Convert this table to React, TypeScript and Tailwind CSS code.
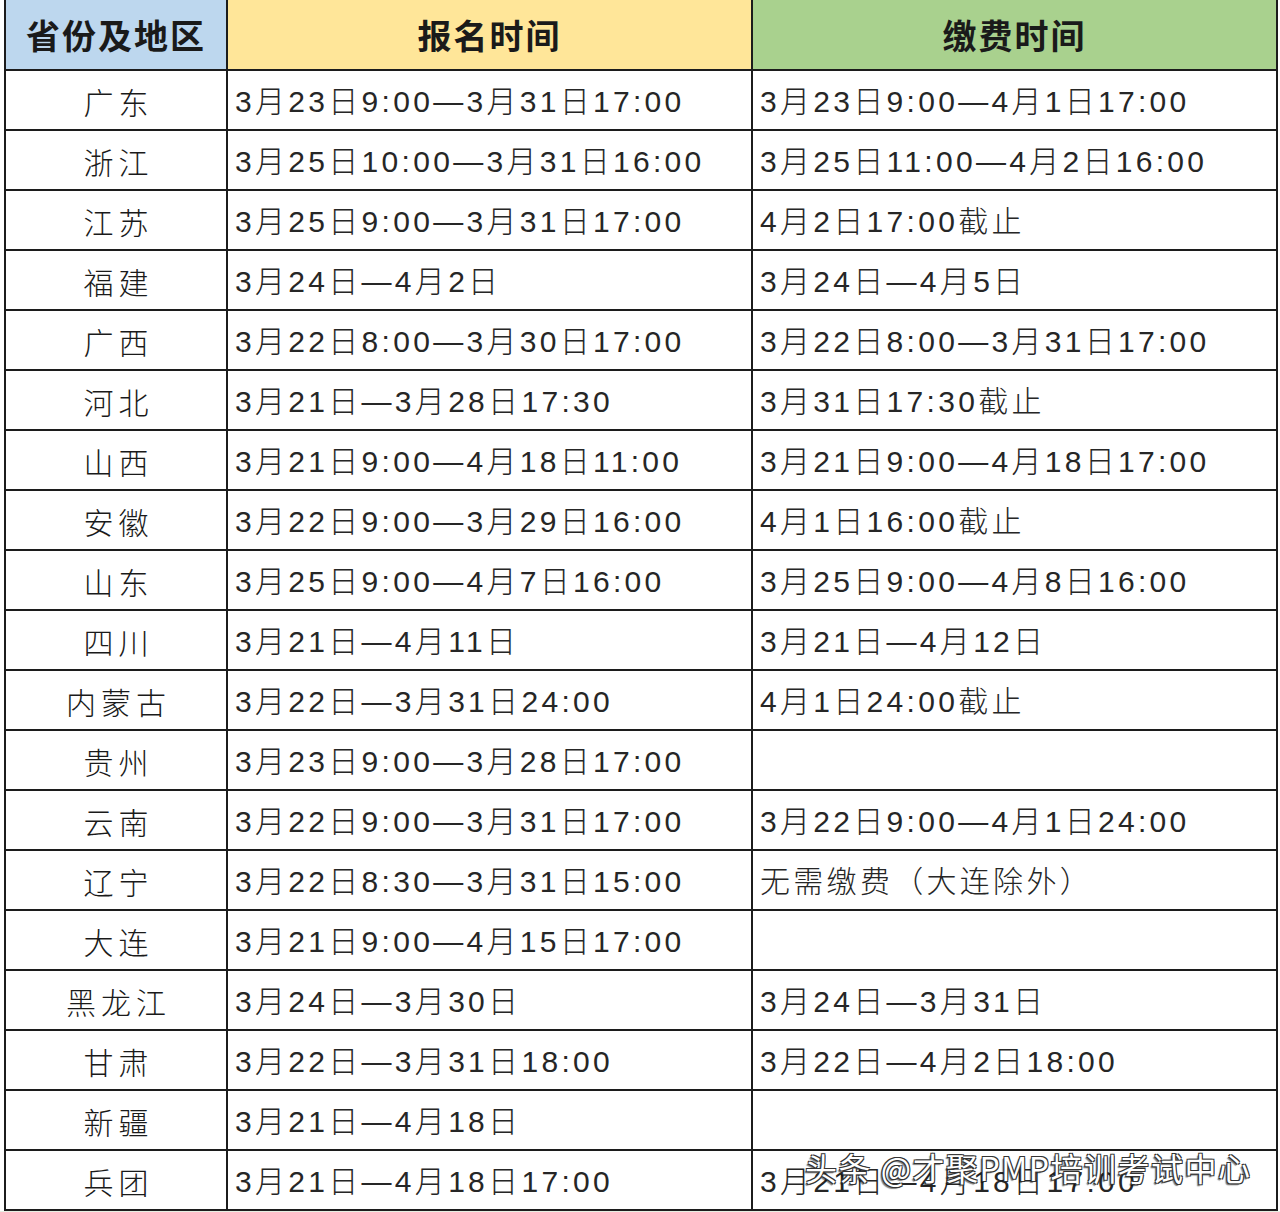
import React from "react";

const rows: [string, string, string][] = [
  ["广东", "3月23日9:00—3月31日17:00", "3月23日9:00—4月1日17:00"],
  ["浙江", "3月25日10:00—3月31日16:00", "3月25日11:00—4月2日16:00"],
  ["江苏", "3月25日9:00—3月31日17:00", "4月2日17:00截止"],
  ["福建", "3月24日—4月2日", "3月24日—4月5日"],
  ["广西", "3月22日8:00—3月30日17:00", "3月22日8:00—3月31日17:00"],
  ["河北", "3月21日—3月28日17:30", "3月31日17:30截止"],
  ["山西", "3月21日9:00—4月18日11:00", "3月21日9:00—4月18日17:00"],
  ["安徽", "3月22日9:00—3月29日16:00", "4月1日16:00截止"],
  ["山东", "3月25日9:00—4月7日16:00", "3月25日9:00—4月8日16:00"],
  ["四川", "3月21日—4月11日", "3月21日—4月12日"],
  ["内蒙古", "3月22日—3月31日24:00", "4月1日24:00截止"],
  ["贵州", "3月23日9:00—3月28日17:00", ""],
  ["云南", "3月22日9:00—3月31日17:00", "3月22日9:00—4月1日24:00"],
  ["辽宁", "3月22日8:30—3月31日15:00", "无需缴费（大连除外）"],
  ["大连", "3月21日9:00—4月15日17:00", ""],
  ["黑龙江", "3月24日—3月30日", "3月24日—3月31日"],
  ["甘肃", "3月22日—3月31日18:00", "3月22日—4月2日18:00"],
  ["新疆", "3月21日—4月18日", ""],
  ["兵团", "3月21日—4月18日17:00", "3月21日—4月18日17:00"],
];

const headCls =
  "h-[71px] border-r-2 border-b-2 border-[#1c1c1c] flex items-center justify-center text-[34px] font-bold tracking-[2px] font-['Noto_Sans_CJK_SC',sans-serif]";
const nameCls =
  "h-[60px] border-r-2 border-b-2 border-[#1c1c1c] flex items-center justify-center text-[30px] font-light tracking-[5px] pl-[5px] pt-[3px] font-['Noto_Sans_CJK_SC',sans-serif]";
const dataCls =
  "h-[60px] border-r-2 border-b-2 border-[#1c1c1c] flex items-center pl-[7px] pt-[3px] text-[30px] font-light tracking-[3.3px] whitespace-nowrap text-[#262626] font-['Liberation_Sans','Noto_Sans_CJK_SC',sans-serif]";

export default function App() {
  return (
    <div className="relative w-[1280px] h-[1212px] bg-white overflow-hidden">
      <div className="ml-[4px] w-[1274px] border-l-2 border-[#1c1c1c] grid grid-cols-[222px_525px_525px] text-[#1a1a1a]">
        <div className={`${headCls} bg-[#bdd7ee]`}>省份及地区</div>
        <div className={`${headCls} bg-[#ffe699]`}>报名时间</div>
        <div className={`${headCls} bg-[#a9d18e]`}>缴费时间</div>
        {rows.map(([p, a, b], i) => (
          <React.Fragment key={i}>
            <div className={nameCls}>{p}</div>
            <div className={dataCls}>{a}</div>
            <div className={dataCls}>{b}</div>
          </React.Fragment>
        ))}
      </div>
      <div className="h-[1px] bg-[#e6eee2]" />
      <div className="absolute left-[805px] top-[1143px] text-[32px] tracking-[1.5px] text-white whitespace-nowrap font-['Noto_Sans_CJK_SC',sans-serif] [text-shadow:-1px_1px_0_#333,1px_1px_0_#333,-1px_-1px_0_#333,1px_-1px_0_#333,-2px_2px_1px_rgba(0,0,0,0.5)]">
        头条 @才聚PMP培训考试中心
      </div>
    </div>
  );
}
